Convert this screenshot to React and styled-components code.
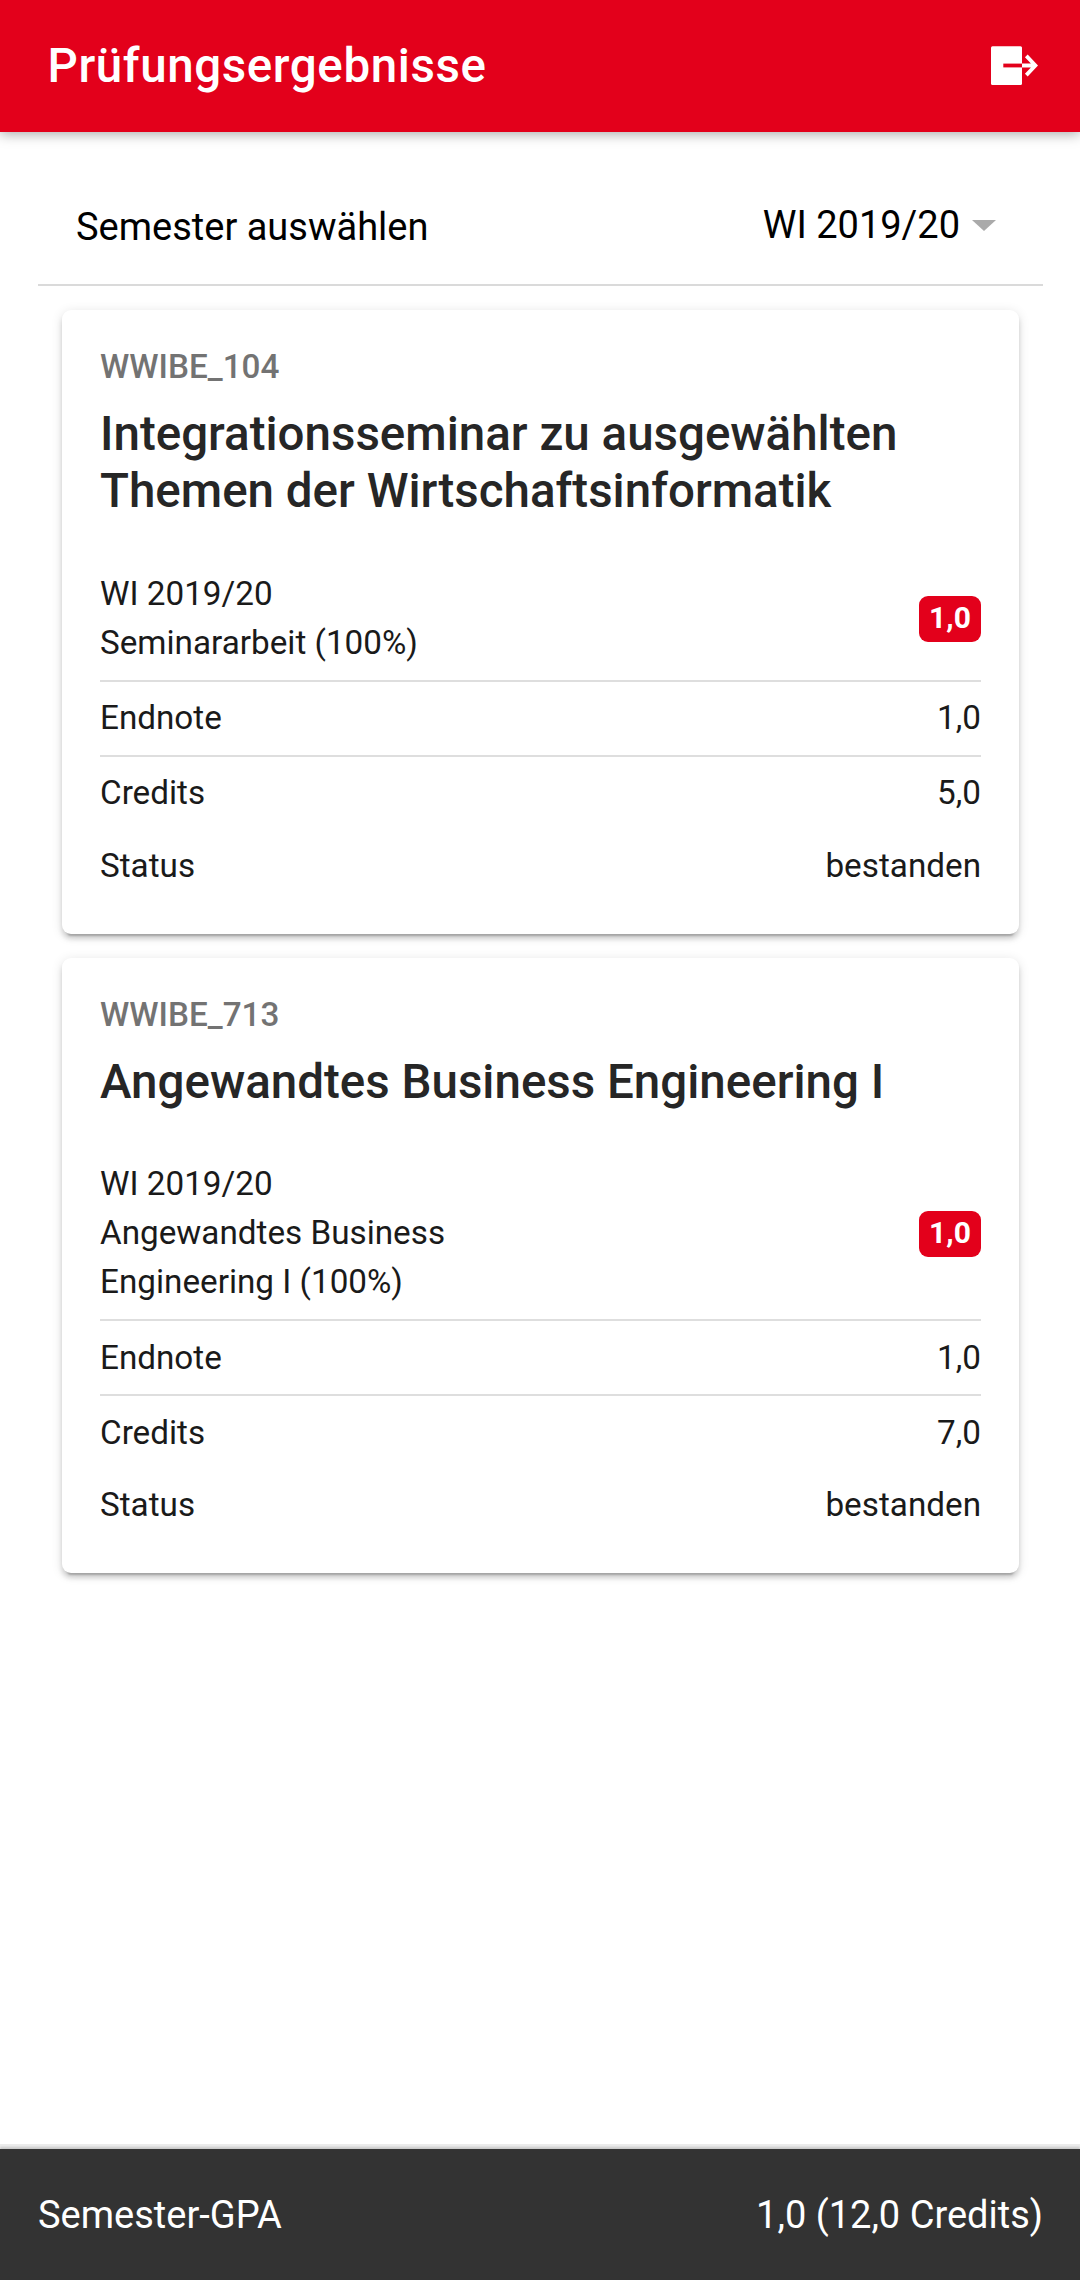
import React from 'react';
import styled, { createGlobalStyle } from 'styled-components';

const GlobalStyle = createGlobalStyle`
  * { box-sizing: border-box; }
  body { margin: 0; background: #fff; font-family: Roboto, sans-serif; }
`;

const Page = styled.div`
  display: flex;
  flex-direction: column;
  width: 1080px;
  height: 2280px;
  background: #fff;
  overflow: hidden;
`;

const Header = styled.header`
  display: flex;
  align-items: center;
  justify-content: space-between;
  height: 132px;
  flex: none;
  padding: 0 42px 0 47.5px;
  background: #e3001b;
  color: #fff;
  box-shadow: 0 2px 12px rgba(0, 0, 0, 0.34);
`;

const HeaderTitle = styled.h1`
  margin: 0;
  font-size: 47.5px;
  font-weight: 500;
  line-height: 56px;
  letter-spacing: 0.6px;
`;

const LogoutIcon = styled.svg`
  display: block;
  width: 48px;
  height: 40px;
`;

const Main = styled.main`
  display: flex;
  flex-direction: column;
  flex: 1;
  padding: 0 37px 0 38px;
`;

const SemesterRow = styled.div`
  display: flex;
  align-items: center;
  justify-content: space-between;
  height: 154px;
  padding: 38px 47px 0 38px;
  border-bottom: 2px solid #dadada;
  font-size: 38px;
  line-height: 46px;
  color: #000;
`;

const Select = styled.div`
  display: flex;
  align-items: center;
  gap: 12px;
  margin-top: -4px;
`;

const Caret = styled.span`
  border: 12px solid transparent;
  border-top: 11px solid #aaa;
  border-bottom: 0;
`;

const CardList = styled.div`
  display: flex;
  flex-direction: column;
  gap: 24px;
  padding: 24px 24px 0;
`;

const Card = styled.article`
  padding: 37px 38px 31.5px;
  border-radius: 9px;
  background: #fff;
  box-shadow: 0 7px 2px -5px rgba(0, 0, 0, 0.2), 0 5px 5px 0 rgba(0, 0, 0, 0.14),
    0 2px 12px 0 rgba(0, 0, 0, 0.12);
`;

const ModuleCode = styled.div`
  font-size: 33.25px;
  font-weight: 500;
  line-height: 40px;
  color: #737373;
`;

const ModuleTitle = styled.h2`
  margin: 19px 0 0;
  font-size: 47.5px;
  font-weight: 500;
  line-height: 57px;
  color: #262626;
`;

const Rows = styled.div`
  margin-top: 35.5px;
  font-size: 33.25px;
  line-height: 49px;
  color: #1a1a1a;
`;

const Row = styled.div`
  display: flex;
  align-items: center;
  justify-content: space-between;
  height: ${(p) => p.$height}px;
  padding-bottom: ${(p) => (p.$exam ? 0 : 0.6)}px;
  border-bottom: ${(p) => (p.$line ? '2px solid #dedede' : '0')};
`;

const ExamName = styled.div`
  width: 400px;
`;

const Badge = styled.span`
  width: 62px;
  height: 46px;
  margin-top: 3px;
  border-radius: 9px;
  background: #e3001b;
  color: #fff;
  font-size: 30px;
  font-weight: 700;
  line-height: 43px;
  text-align: center;
`;

const Footer = styled.footer`
  display: flex;
  align-items: center;
  justify-content: space-between;
  height: 131px;
  flex: none;
  padding: 0 37px 0 38px;
  background: #333;
  color: #fff;
  font-size: 38px;
  line-height: 46px;
  box-shadow: 0 -2px 2px rgba(0, 0, 0, 0.15), 0 -5px 0 #ececec;
`;

const modules = [
  {
    code: 'WWIBE_104',
    title: 'Integrationsseminar zu ausgewählten Themen der Wirtschaftsinformatik',
    semester: 'WI 2019/20',
    exam: 'Seminararbeit (100%)',
    height: 126,
    grade: '1,0',
    credits: '5,0',
    status: 'bestanden',
  },
  {
    code: 'WWIBE_713',
    title: 'Angewandtes Business Engineering I',
    semester: 'WI 2019/20',
    exam: 'Angewandtes Business Engineering I (100%)',
    height: 175,
    grade: '1,0',
    credits: '7,0',
    status: 'bestanden',
  },
];

function ModuleCard({ module }) {
  return (
    <Card>
      <ModuleCode>{module.code}</ModuleCode>
      <ModuleTitle>{module.title}</ModuleTitle>
      <Rows>
        <Row $height={module.height} $line $exam>
          <ExamName>
            <div>{module.semester}</div>
            <div>{module.exam}</div>
          </ExamName>
          <Badge>{module.grade}</Badge>
        </Row>
        <Row $height={75} $line>
          <span>Endnote</span>
          <span>{module.grade}</span>
        </Row>
        <Row $height={72.6}>
          <span>Credits</span>
          <span>{module.credits}</span>
        </Row>
        <Row $height={73}>
          <span>Status</span>
          <span>{module.status}</span>
        </Row>
      </Rows>
    </Card>
  );
}

export default function App() {
  return (
    <Page>
      <GlobalStyle />
      <Header>
        <HeaderTitle>Prüfungsergebnisse</HeaderTitle>
        <LogoutIcon viewBox="0 0 48 40">
          <rect x="1" y="0.2" width="31" height="38.8" rx="1.5" fill="#fff" />
          <path d="M13.3 19.5H32" stroke="#e3001b" strokeWidth="3.8" />
          <path d="M32 19.5H45M36.3 9.9L45.4 19.5L36.3 29.1" fill="none" stroke="#fff" strokeWidth="3.8" />
        </LogoutIcon>
      </Header>
      <Main>
        <SemesterRow>
          <span>Semester auswählen</span>
          <Select>
            <span>WI 2019/20</span>
            <Caret />
          </Select>
        </SemesterRow>
        <CardList>
          {modules.map((m) => (
            <ModuleCard key={m.code} module={m} />
          ))}
        </CardList>
      </Main>
      <Footer>
        <span>Semester-GPA</span>
        <span>1,0 (12,0 Credits)</span>
      </Footer>
    </Page>
  );
}
